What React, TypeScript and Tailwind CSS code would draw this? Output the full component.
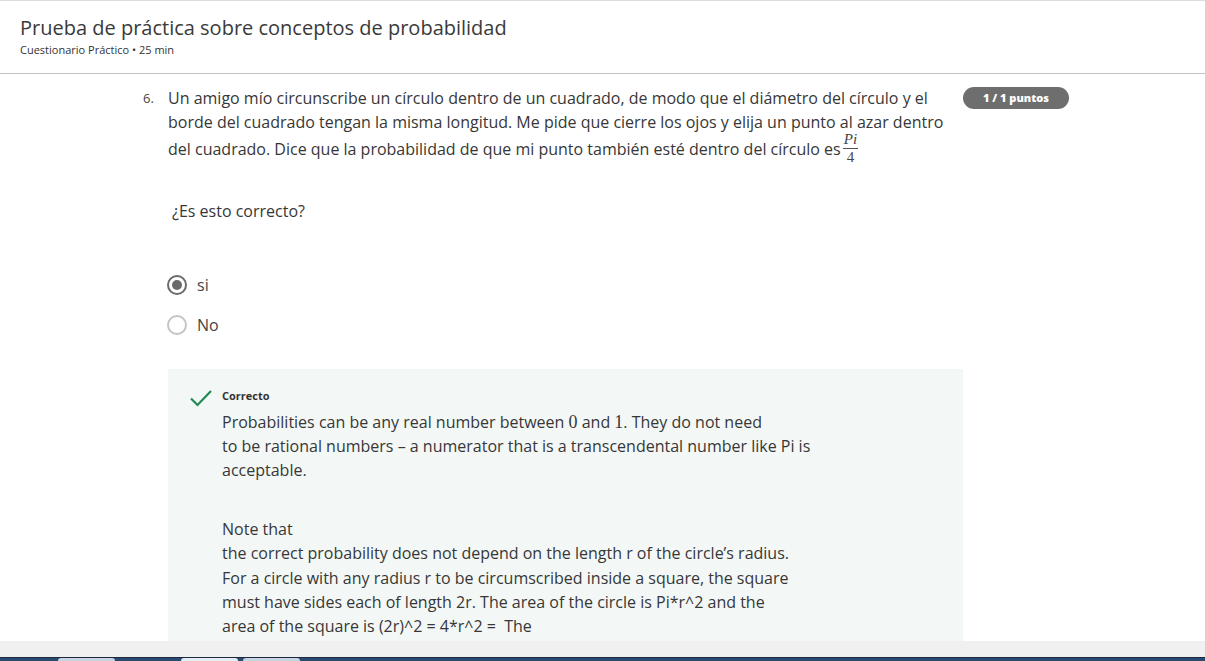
import React from "react";

const serif = { fontFamily: '"Liberation Serif", "DejaVu Serif", serif' };

function Frac() {
  return (
    <span className="inline-flex flex-col items-center align-middle mx-[2px] relative top-[-3px] font-normal text-[#444]" style={serif}>
      <span className="italic text-[15px] leading-[16px] px-[1px]">Pi</span>
      <span className="block w-full h-px bg-[#555] my-[1px]"></span>
      <span className="text-[15px] leading-[15px]">4</span>
    </span>
  );
}

export default function App() {
  return (
    <div className="w-[1205px] h-[661px] overflow-hidden bg-white flex flex-col" style={{ fontFamily: '"Open Sans", "Noto Sans", sans-serif' }}>
      <div className="h-[641px] overflow-hidden flex flex-col border-t border-[#dcdcdc]">
        <header className="h-[73px] border-b border-[#c4c4c4] px-[20px] pt-[13px] shrink-0">
          <h1 className="text-[20px] leading-[28px] text-[#3a3a3a]">Prueba de práctica sobre conceptos de probabilidad</h1>
          <p className="text-[11px] leading-[14px] text-[#333] mt-[1px]">Cuestionario Práctico • 25 min</p>
        </header>
        <main className="flex-1 relative pl-[143px] pt-[12px] text-[#373737]">
          <div className="flex">
            <div className="w-[25px] text-[13px] leading-[24px] text-[#444]">6.</div>
            <div className="w-[780px] text-[16px] leading-[24px]">
              Un amigo mío circunscribe un círculo dentro de un cuadrado, de modo que el diámetro del círculo y el borde del cuadrado tengan la misma longitud. Me pide que cierre los ojos y elija un punto al azar dentro del cuadrado. Dice que la probabilidad de que mi punto también esté dentro del círculo es<Frac />
            </div>
            <div className="ml-[15px] mt-[-2px]">
              <span className="inline-flex items-center justify-center w-[106px] h-[22px] rounded-full bg-[#6e6e6e] text-white text-[11px] font-extrabold">1 / 1 puntos</span>
            </div>
          </div>
          <p className="ml-[29px] mt-[31px] text-[16px] leading-[24px]">¿Es esto correcto?</p>
          <div className="ml-[24px] mt-[50px] flex flex-col gap-[16px]">
            <label className="flex items-center gap-[10px] h-[24px]">
              <span className="w-[20px] h-[20px] rounded-full border-[2px] border-[#6a6a6a] flex items-center justify-center">
                <span className="w-[10px] h-[10px] rounded-full bg-[#6a6a6a]"></span>
              </span>
              <span className="text-[16px] text-[#444]">si</span>
            </label>
            <label className="flex items-center gap-[10px] h-[24px]">
              <span className="w-[20px] h-[20px] rounded-full border-[2px] border-[#c4c4c4]"></span>
              <span className="text-[16px] text-[#444]">No</span>
            </label>
          </div>
          <div className="ml-[25px] mt-[32px] w-[795px] bg-[#f3f8f6] pt-[19px] pl-[22px] pb-[40px]">
            <div className="flex">
              <svg width="22" height="18" viewBox="0 0 22 18" className="mt-[1px] shrink-0">
                <path d="M1 9.5 L7.5 16 L21 2" fill="none" stroke="#1f8a55" strokeWidth="2.2" />
              </svg>
              <div className="ml-[10px]">
                <p className="text-[11px] leading-[16px] font-bold text-[#333]">Correcto</p>
                <p className="text-[16px] leading-[24px] mt-[6px]">
                  Probabilities can be any real number between <span style={serif} className="text-[18px]">0</span> and <span style={serif} className="text-[18px]">1</span>. They do not need<br />
                  to be rational numbers – a numerator that is a transcendental number like Pi is<br />
                  acceptable.
                </p>
                <p className="text-[16px] leading-[24.3px] mt-[35px]">
                  Note that<br />
                  the correct probability does not depend on the length r of the circle’s radius.<br />
                  For a circle with any radius r to be circumscribed inside a square, the square<br />
                  must have sides each of length 2r. The area of the circle is Pi*r^2 and the<br />
                  area of the square is (2r)^2 = 4*r^2 =&nbsp; The<br />
                  ratio of the areas is Pi/4.
                </p>
              </div>
            </div>
          </div>
        </main>
      </div>
      <div className="h-[16px] bg-[#f0f0f0] shrink-0"></div>
      <div className="h-[4px] bg-[#2b4a72] shrink-0 flex border-t border-[#1b2a3c]">
        <div className="w-[58px]"></div>
        <div className="w-[57px] bg-[#c8d4e2] rounded-t-sm"></div>
        <div className="w-[66px]"></div>
        <div className="w-[57px] bg-[#e6ecf3] rounded-t-sm"></div>
        <div className="w-[5px]"></div>
        <div className="w-[57px] bg-[#c8d4e2] rounded-t-sm"></div>
      </div>
    </div>
  );
}
